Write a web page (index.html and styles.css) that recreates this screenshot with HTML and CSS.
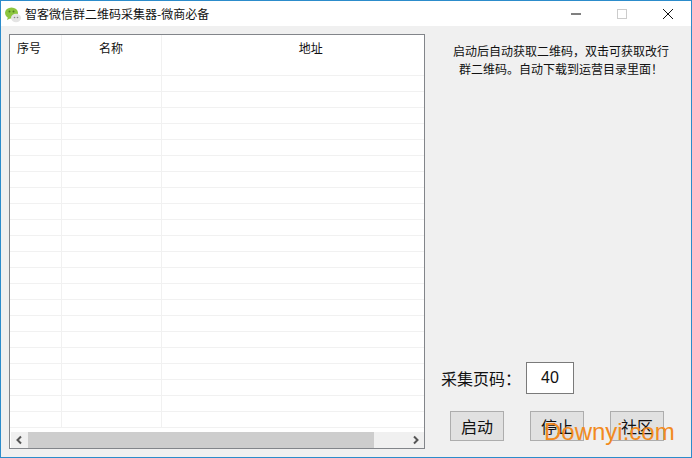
FILE: index.html
```html
<!DOCTYPE html>
<html lang="zh">
<head>
<meta charset="utf-8">
<title>智客微信群二维码采集器-微商必备</title>
<link rel="stylesheet" href="styles.css">
</head>
<body>
<div class="window">
  <header class="titlebar">
    <svg class="app-icon" width="18" height="18" viewBox="0 0 18 18">
      <ellipse cx="7.500" cy="8" rx="6.500" ry="5.500" fill="#8cc63f"/>
      <path d="M4 12l-1 3 4-2z" fill="#8cc63f"/>
      <ellipse cx="12" cy="13" rx="5" ry="4.200" fill="#e4e4e4"/>
      <circle cx="5.500" cy="6.500" r="1" fill="#4f7f1e"/>
      <circle cx="9.500" cy="6.500" r="1" fill="#4f7f1e"/>
      <circle cx="10.500" cy="12.500" r=".8" fill="#888"/>
      <circle cx="13.500" cy="12.500" r=".8" fill="#888"/>
    </svg>
    <span class="title">智客微信群二维码采集器-微商必备</span>
    <div class="controls">
      <svg class="ctl" width="46" height="26" viewBox="0 0 46 26"><path d="M18 13h10" stroke="#000" fill="none"/></svg>
      <svg class="ctl" width="46" height="26" viewBox="0 0 46 26"><rect x="18.500" y="8.500" width="9" height="9" stroke="#ccc" fill="none"/></svg>
      <svg class="ctl" width="46" height="26" viewBox="0 0 46 26"><path d="M18 8l10 10M28 8l-10 10" stroke="#111" fill="none"/></svg>
    </div>
  </header>
  <main class="content">
    <section class="listview">
      <div class="table-wrap">
        <table class="grid">
          <thead>
            <tr><th class="c1">序号</th><th class="c2">名称</th><th class="c3">地址</th></tr>
          </thead>
          <tbody>
            <tr class="first"><td></td><td></td><td></td></tr>
            <tr><td></td><td></td><td></td></tr><tr><td></td><td></td><td></td></tr><tr><td></td><td></td><td></td></tr>
            <tr><td></td><td></td><td></td></tr><tr><td></td><td></td><td></td></tr><tr><td></td><td></td><td></td></tr>
            <tr><td></td><td></td><td></td></tr><tr><td></td><td></td><td></td></tr><tr><td></td><td></td><td></td></tr>
            <tr><td></td><td></td><td></td></tr><tr><td></td><td></td><td></td></tr><tr><td></td><td></td><td></td></tr>
            <tr><td></td><td></td><td></td></tr><tr><td></td><td></td><td></td></tr><tr><td></td><td></td><td></td></tr>
            <tr><td></td><td></td><td></td></tr><tr><td></td><td></td><td></td></tr><tr><td></td><td></td><td></td></tr>
            <tr><td></td><td></td><td></td></tr><tr><td></td><td></td><td></td></tr><tr><td></td><td></td><td></td></tr>
            <tr><td></td><td></td><td></td></tr>
          </tbody>
        </table>
      </div>
      <div class="hscroll">
        <svg class="arrow" width="17" height="16" viewBox="0 0 17 16"><path d="M10 4.500L6.500 8l3.500 3.500" stroke="#555" stroke-width="2" fill="none"/></svg>
        <div class="track"><div class="thumb"></div></div>
        <svg class="arrow" width="17" height="16" viewBox="0 0 17 16"><path d="M7 4.500L10.500 8 7 11.500" stroke="#555" stroke-width="2" fill="none"/></svg>
      </div>
    </section>
    <aside class="side">
      <p class="tip">启动后自动获取二维码，双击可获取改行<br>群二维码。自动下载到运营目录里面！</p>
      <div class="pagefield">
        <label class="pagelabel">采集页码：</label>
        <div class="pageinput">40</div>
      </div>
      <div class="buttons">
        <button class="btn">启动</button>
        <button class="btn">停止</button>
        <button class="btn">社区</button>
      </div>
    </aside>
  </main>
  <div class="watermark">Downyi.com</div>
</div>
</body>
</html>
```
FILE: styles.css
```css
* { box-sizing: border-box; }
html, body { margin: 0; padding: 0; }
body {
  width: 692px;
  height: 458px;
  overflow: hidden;
  font-family: "Noto Sans CJK SC", "Liberation Sans", sans-serif;
}
.window {
  position: relative;
  width: 692px;
  height: 458px;
  border: 1px solid #2c8ccb;
  background: #f0f0f0;
  display: flex;
  flex-direction: column;
}
.titlebar {
  height: 25px;
  background: #fff;
  display: flex;
  align-items: center;
  padding-left: 3px;
}
.app-icon { flex: none; }
.title {
  margin-left: 3px;
  font-size: 12px;
  color: #111;
}
.controls {
  margin-left: auto;
  display: flex;
}
.ctl { display: block; }
.content {
  flex: 1;
  display: flex;
  padding: 8px 0 8px 8px;
  min-height: 0;
}
.listview {
  width: 416px;
  height: 415px;
  border: 1px solid #82858a;
  background: #fff;
  display: flex;
  flex-direction: column;
}
.table-wrap {
  flex: 1;
  overflow: hidden;
  min-height: 0;
}
.grid {
  border-collapse: collapse;
  table-layout: fixed;
  width: 414px;
}
.grid th {
  height: 25px;
  padding: 0;
  font-weight: 400;
  font-size: 12px;
  color: #111;
  border-right: 1px solid #f1f1f1;
  text-align: center;
}
.grid th.c1 { width: 51px; text-align: left; padding-left: 7px; }
.grid th.c2 { width: 100px; }
.grid th.c3 { width: 263px; border-right: 0; padding-left: 36px; }
.grid td {
  height: 16px;
  padding: 0;
  border-right: 1px solid #f1f1f1;
  border-bottom: 1px solid #f1f1f1;
}
.grid td:last-child { border-right: 0; }
.grid tr.first td { height: 15px; }
.hscroll {
  flex: none;
  height: 16px;
  display: flex;
  background: #f0f0f0;
  margin: 0 0 0 1px;
}
.arrow { flex: none; display: block; }
.track { flex: 1; }
.thumb {
  width: 346px;
  height: 16px;
  background: #cdcdcd;
}
.side {
  width: 266px;
  display: flex;
  flex-direction: column;
  padding: 0 0 8px 24px;
}
.tip {
  margin: 8px 0 0;
  font-size: 12px;
  line-height: 18px;
  color: #111;
  text-align: center;
  width: 224px;
}
.pagefield {
  margin-top: auto;
  display: flex;
  align-items: center;
  margin-left: -8px;
}
.pagelabel {
  font-size: 16px;
  color: #111;
  width: 85px;
  white-space: nowrap;
}
.pageinput {
  width: 48px;
  height: 32px;
  border: 1px solid #7a7a7a;
  background: #fff;
  font-family: "Liberation Sans", sans-serif;
  font-size: 16px;
  line-height: 30px;
  text-align: center;
  color: #111;
}
.buttons {
  margin-top: 17px;
  display: flex;
  gap: 26px;
  padding-left: 1px;
}
.btn {
  width: 54px;
  height: 30px;
  padding: 0;
  border: 1px solid #adadad;
  background: #e1e1e1;
  font-family: inherit;
  font-size: 16px;
  color: #111;
}
.watermark {
  position: absolute;
  left: 543px;
  top: 417px;
  font-family: "Liberation Sans", sans-serif;
  font-size: 24px;
  color: #f28a20;
  white-space: nowrap;
}
```
